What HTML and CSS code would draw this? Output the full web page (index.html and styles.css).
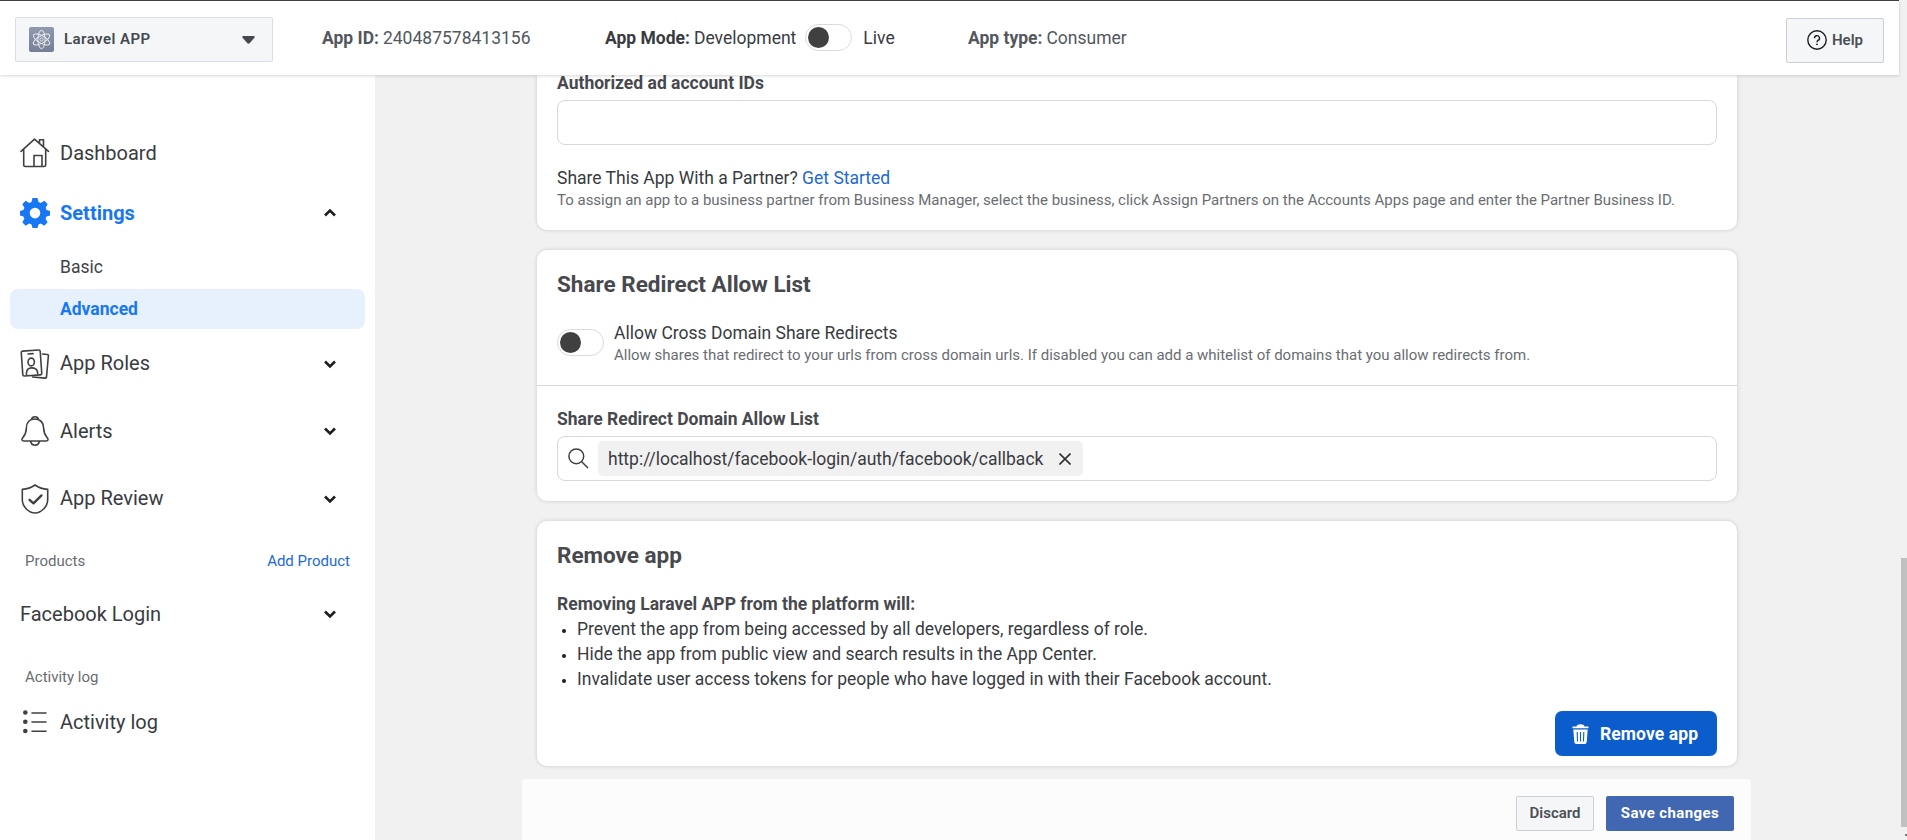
FILE: index.html
```html
<!DOCTYPE html>
<html lang="en">
<head>
<meta charset="utf-8">
<title>Laravel APP - Advanced settings</title>
<link rel="stylesheet" href="styles.css">
</head>
<body>
<div class="app">
  <div class="page">
    <header class="topbar">
      <div class="app-select">
        <svg class="app-logo" viewBox="0 0 25 25"><defs><linearGradient id="g" x1="0" y1="0" x2="0" y2="1"><stop offset="0" stop-color="#8f99b0"/><stop offset="1" stop-color="#747e95"/></linearGradient></defs><rect width="25" height="25" rx="2" fill="url(#g)"/><g fill="none" stroke="#fff" stroke-width="1" opacity=".85"><ellipse cx="12.5" cy="12.5" rx="3.6" ry="9.2"/><ellipse cx="12.5" cy="12.5" rx="3.6" ry="9.2" transform="rotate(60 12.5 12.5)"/><ellipse cx="12.5" cy="12.5" rx="3.6" ry="9.2" transform="rotate(120 12.5 12.5)"/><circle cx="12.5" cy="12.5" r="1.6"/></g></svg>
        <span class="app-name">Laravel APP</span>
        <svg class="caret" viewBox="0 0 13 8"><path d="M1 0h11q1 .6.6 1.6L7.6 7.3q-1.100.8-2.200 0L.4 1.600Q0 .6 1 0z" fill="#444950"/></svg>
      </div>
      <div class="meta meta-id"><b>App ID:</b> 240487578413156</div>
      <div class="meta meta-mode"><b>App Mode:</b> Development <span class="toggle"></span> Live</div>
      <div class="meta meta-type"><b>App type:</b> Consumer</div>
      <button class="help"><svg viewBox="0 0 20 20" width="20" height="20"><circle cx="10" cy="10" r="9.200" fill="none" stroke="#1c1e21" stroke-width="1.400"/><path d="M7.500 8.200a2.500 2.500 0 1 1 3.600 2.200q-1.100.6-1.100 1.800" fill="none" stroke="#1c1e21" stroke-width="1.400"/><circle cx="10" cy="14.300" r=".9" fill="#1c1e21"/></svg>Help</button>
    </header>
    <div class="body">
      <nav class="sidebar">
        <a class="item dash"><svg viewBox="0 0 30 30"><path d="M1 13.300 14.500 1.200 28.500 13.300M3.700 11.500V27q0 1.500 1.500 1.500h19q1.500 0 1.500-1.500V11.500M14 28.500V17.500h8v11M19.500 5V1.700h4V9"/></svg><span>Dashboard</span></a>
        <a class="item settings"><svg viewBox="0 0 30 30"><path class="solid" fill-rule="evenodd" d="M12.500 0h5l1 4 2.300 1 3.600-2.200 3.300 3.400-2.100 3.600 1 2.300L30 13v4.500l-3.500 1-1 2.300 2.100 3.500-3.300 3.400-3.600-2.100-2.200 1-1 3.400h-5l-1-3.400-2.300-1-3.600 2.100-3.300-3.400 2.100-3.500-1-2.300L0 17.500V13l3.400-.9 1-2.300L2.300 6.200l3.300-3.400L9.200 5l2.300-1zM15 9.800a5.300 5.300 0 1 0 0 10.600a5.300 5.300 0 0 0 0-10.600z"/></svg><span>Settings</span><svg class="chev" viewBox="0 0 14 10"><path d="M2 7.500 7 2.500l5 5"/></svg></a>
        <a class="sub">Basic</a>
        <a class="sub active">Advanced</a>
        <a class="item roles"><svg viewBox="0 0 30 30"><rect x="2" y="1.500" width="19" height="25" rx="1.500" transform="rotate(-4 11.500 14)"/><path d="M22.500 5l5 .5q1 .2.900 1.200L26.500 28q-.2 1.200-1.300 1.100L12.500 28M8 5l5-.4M6.500 25.500v-2q.5-4.500 5-4.600 5-.1 6 3.900l.2 2"/><ellipse cx="11.200" cy="13" rx="3.200" ry="3.900"/></svg><span>App Roles</span><svg class="chev" viewBox="0 0 14 10"><path d="M2 2.500l5 5 5-5"/></svg></a>
        <a class="item alerts"><svg viewBox="0 0 30 30"><path d="M11.500 3.500Q12 .8 15 .8t3.500 2.700M15 3C9 3 6.300 7.500 6.300 12.500c0 5-1.300 6.500-3.600 9.300C1.300 23.500 2 25 3.800 25h22.400c1.800 0 2.500-1.500 1.100-3.200-2.300-2.800-3.600-4.300-3.600-9.300C23.700 7.500 21 3 15 3zM10.500 25q.8 4.200 4.500 4.200t4.500-4.200"/></svg><span>Alerts</span><svg class="chev" viewBox="0 0 14 10"><path d="M2 2.500l5 5 5-5"/></svg></a>
        <a class="item review"><svg viewBox="0 0 30 30"><path d="M15 1q-5.500 4-12.700 4.400v10.300c0 7 6.700 13.300 12.700 13.300s12.700-6.300 12.700-13.300V5.400Q20.500 5 15 1z"/><path class="tick" d="M9.500 15.800l4 3.600 8-8"/></svg><span>App Review</span><svg class="chev" viewBox="0 0 14 10"><path d="M2 2.500l5 5 5-5"/></svg></a>
        <div class="section products"><span>Products</span><a class="link">Add Product</a></div>
        <a class="item login"><span>Facebook Login</span><svg class="chev" viewBox="0 0 14 10"><path d="M2 2.500l5 5 5-5"/></svg></a>
        <div class="section activity"><span>Activity log</span></div>
        <a class="item log"><svg viewBox="0 0 30 30"><path d="M12 6h14M12 15h14M12 24.300h14"/><g class="solid"><circle cx="5.300" cy="5.500" r="2.300"/><circle cx="5.300" cy="14.700" r="2.300"/><circle cx="5.300" cy="24" r="2.300"/></g></svg><span>Activity log</span></a>
      </nav>
      <main class="content">
        <section class="card partner">
          <div class="label">Authorized ad account IDs</div>
          <div class="field"></div>
          <p class="line share">Share This App With a Partner? <a class="link">Get Started</a></p>
          <p class="note">To assign an app to a business partner from Business Manager, select the business, click Assign Partners on the Accounts Apps page and enter the Partner Business ID.</p>
        </section>
        <section class="card redirect">
          <h2>Share Redirect Allow List</h2>
          <div class="option"><span class="toggle"></span><div><p class="line">Allow Cross Domain Share Redirects</p><p class="note">Allow shares that redirect to your urls from cross domain urls. If disabled you can add a whitelist of domains that you allow redirects from.</p></div></div>
          <div class="label allow">Share Redirect Domain Allow List</div>
          <div class="field tokens">
            <svg class="search" viewBox="0 0 21 21"><circle cx="8.300" cy="8.300" r="7.400"/><path d="M13.500 13.500l6.500 6.500"/></svg>
            <span class="chip"><span>http://localhost/facebook-login/auth/facebook/callback</span><svg viewBox="0 0 12 12"><path d="M.5.500l11 11M11.500.500l-11 11"/></svg></span>
          </div>
        </section>
        <section class="card remove">
          <h2>Remove app</h2>
          <div class="label will">Removing Laravel APP from the platform will:</div>
          <ul>
            <li>Prevent the app from being accessed by all developers, regardless of role.</li>
            <li>Hide the app from public view and search results in the App Center.</li>
            <li>Invalidate user access tokens for people who have logged in with their Facebook account.</li>
          </ul>
          <button class="danger"><svg viewBox="0 0 17 20"><path d="M.5 2.500h4Q5 .3 8.500.3t4 2.200h4v1.700H.5z" fill="#fff"/><path d="M1.300 5.500h14.400l-1 12.500q-.2 2-2 2H4.300q-1.800 0-2-2z" fill="#fff"/><path d="M5.200 8l.3 9.500M8.500 8v9.500M11.800 8l-.3 9.500" stroke="#0b5dcb" stroke-width="1.100"/></svg><span>Remove app</span></button>
        </section>
        <footer class="savebar"><button class="discard">Discard</button><button class="save">Save changes</button></footer>
      </main>
    </div>
  </div>
  <div class="scroll"><div class="thumb"></div><i class="arrow"></i></div>
</div>
</body>
</html>
```
FILE: styles.css
```css
* { box-sizing: border-box; }
body { margin: 0; font: 17.5px/25px Roboto, "Liberation Sans", sans-serif; color: #393b3f; background: #f1f1f1; }
p, h2, ul { margin: 0; padding: 0; }
b { font-weight: 700; }
button { font: inherit; padding: 0; display: flex; align-items: center; justify-content: center; border-radius: 2px; }
.app { display: flex; width: 1907px; height: 840px; overflow: hidden; }
.page { width: 1899px; display: flex; flex-direction: column; }
.topbar { height: 75px; flex: none; background: #fff; border-top: 1px solid #3f3f41; box-shadow: 0 1px 3px rgba(0,0,0,.16); z-index: 1; position: relative; display: flex; align-items: flex-start; padding-left: 15px; }
.app-select { width: 258px; height: 45px; margin-top: 16px; background: #f5f6f7; border: 1px solid #dadde1; border-radius: 2px; display: flex; align-items: center; padding: 0 17px 0 13px; }
.app-logo { width: 25px; height: 25px; }
.app-name { font-size: 15px; font-weight: 600; color: #444950; margin-left: 10px; flex: 1; letter-spacing: .45px; }
.caret { width: 13px; height: 8px; }
.meta { height: 27px; margin-top: 24px; display: flex; align-items: center; gap: 4px; white-space: nowrap; color: #53575e; }
.meta-id { margin-left: 49px; width: 283px; }
.meta-mode { width: 363px; color: #393b3f; }
.meta-mode .toggle { margin: -2px 7px 0 5px; }
.toggle { flex: none; width: 47px; height: 27px; border: 1px solid #dadada; border-radius: 14px; background: #fff; display: flex; align-items: center; padding-left: 2px; }
.toggle::before { content: ""; width: 21px; height: 21px; border-radius: 50%; background: #404040; }
.help { margin: 17px 15px 0 auto; width: 98px; height: 45px; background: #f5f6f7; border: 1px solid #ccd0d5; font-size: 15px; font-weight: 600; color: #4b4f56; gap: 5px; padding-bottom: 1px; }
.body { display: flex; flex: 1; min-height: 0; }
.sidebar { width: 375px; background: #fff; padding-top: 48px; display: flex; flex-direction: column; }
.item { display: flex; align-items: center; height: 60px; padding: 0 38px 0 20px; font-size: 20px; gap: 10px; flex: none; }
.item span { flex: 1; }
.item svg { width: 30px; height: 30px; fill: none; stroke: #404040; stroke-width: 1.600; stroke-linejoin: round; stroke-linecap: round; }
.item .chev { width: 14px; height: 10px; stroke: #1c1e21; stroke-width: 2.600; stroke-linecap: butt; stroke-linejoin: miter; }
.item .solid { fill: #404040; stroke: none; }
.item .tick { stroke-width: 2.300; }
.settings > span { color: #1877f2; font-weight: 700; }
.settings .solid { fill: #1877f2; }
.sub { height: 40px; line-height: 40px; margin: 0 10px; padding-left: 50px; border-radius: 8px; color: #404247; flex: none; }
.settings + .sub { margin-top: 4px; }
.sub.active { background: #e7f1fe; color: #1877f2; font-weight: 700; margin-top: 2px; }
.roles { height: 67px; margin-top: 1px; }
.alerts { height: 68px; }
.review { height: 67px; }
.section { font-size: 15px; line-height: 20px; color: #6a6d71; padding: 0 25px; display: flex; justify-content: space-between; flex: none; }
.products { margin-top: 19px; }
.login { margin-top: 13px; }
.activity { margin-top: 23px; }
.log { margin-top: 5px; }
.link { color: #1d69d4; }
.content { width: 1229px; margin-left: 147px; display: flex; flex-direction: column; }
.card { margin: 0 14px 20px 15px; padding: 0 20px; background: #fff; border-radius: 10px; box-shadow: 0 0 4px rgba(0,0,0,.16); flex: none; }
.partner { height: 155px; border-radius: 0 0 10px 10px; }
.label { font-weight: 700; color: #47494e; line-height: 25px; }
.partner .label { margin-top: -4px; }
.field { height: 45px; border: 1px solid #d8d8d8; border-radius: 8px; margin-top: 4px; }
.share { margin-top: 21px; }
.line { line-height: 25px; }
.note { font-size: 15px; line-height: 20px; color: #6a6d71; white-space: nowrap; letter-spacing: -.006px; }
.share + .note { margin-top: -1px; }
h2 { font-size: 22.5px; line-height: 30px; font-weight: 700; color: #47494e; padding-top: 19px; }
.redirect { height: 251px; }
.option { display: flex; align-items: center; gap: 10px; margin: 0 -20px; padding: 21px 20px 20px; height: 87px; border-bottom: 1px solid #d8d8d8; }
.option .line { padding-top: 1px; margin-bottom: -1px; }
.allow { margin-top: 21px; }
.tokens { display: flex; align-items: center; padding-left: 10px; gap: 9px; }
.search { width: 21px; height: 21px; fill: none; stroke: #404040; stroke-width: 1.500; }
.chip { height: 35px; width: 485px; background: #f1f1f1; border-radius: 5px; display: flex; align-items: center; justify-content: space-between; padding: 0 12px 0 10px; }
.chip span { padding-top: 2px; }
.chip svg { width: 12px; height: 12px; stroke: #303030; stroke-width: 1.600; }
.remove { height: 245px; margin-bottom: 13px; }
.will { margin-top: 22px; }
ul { list-style: none; }
li { padding-left: 20px; display: flex; align-items: center; }
li::before { content: ""; width: 4px; height: 4px; border-radius: 50%; background: #1c1e21; margin: 3px 11px 0 -15px; }
.danger { width: 162px; height: 45px; border: 0; border-radius: 7px; background: #0b5dcb; color: #fff; font-weight: 700; margin: 19px 0 0 auto; gap: 11px; padding-right: 2px; }
.danger span { padding-top: 2px; letter-spacing: .1px; }
.danger svg { width: 17px; height: 20px; }
.savebar { background: #fcfcfc; flex: 1; border-radius: 4px 4px 0 0; display: flex; justify-content: flex-end; align-items: flex-start; padding: 17px 17px 0; gap: 12px; }
.savebar button { height: 35px; font-size: 15px; }
.discard { width: 78px; background: #f5f6f7; border: 1px solid #ccd0d5; color: #4b4f56; font-weight: 600; }
.savebar .save { width: 128px; background: #4267b2; border: 0; color: #fff; font-weight: 700; letter-spacing: .4px; }
.scroll { width: 8px; background: #f1f1f1; display: flex; flex-direction: column; align-items: flex-end; }
.thumb { margin-top: 558px; width: 6px; height: 269px; background: #c1c1c1; }
.arrow { width: 2px; height: 2px; background: #777; margin-top: 7px; }
```
